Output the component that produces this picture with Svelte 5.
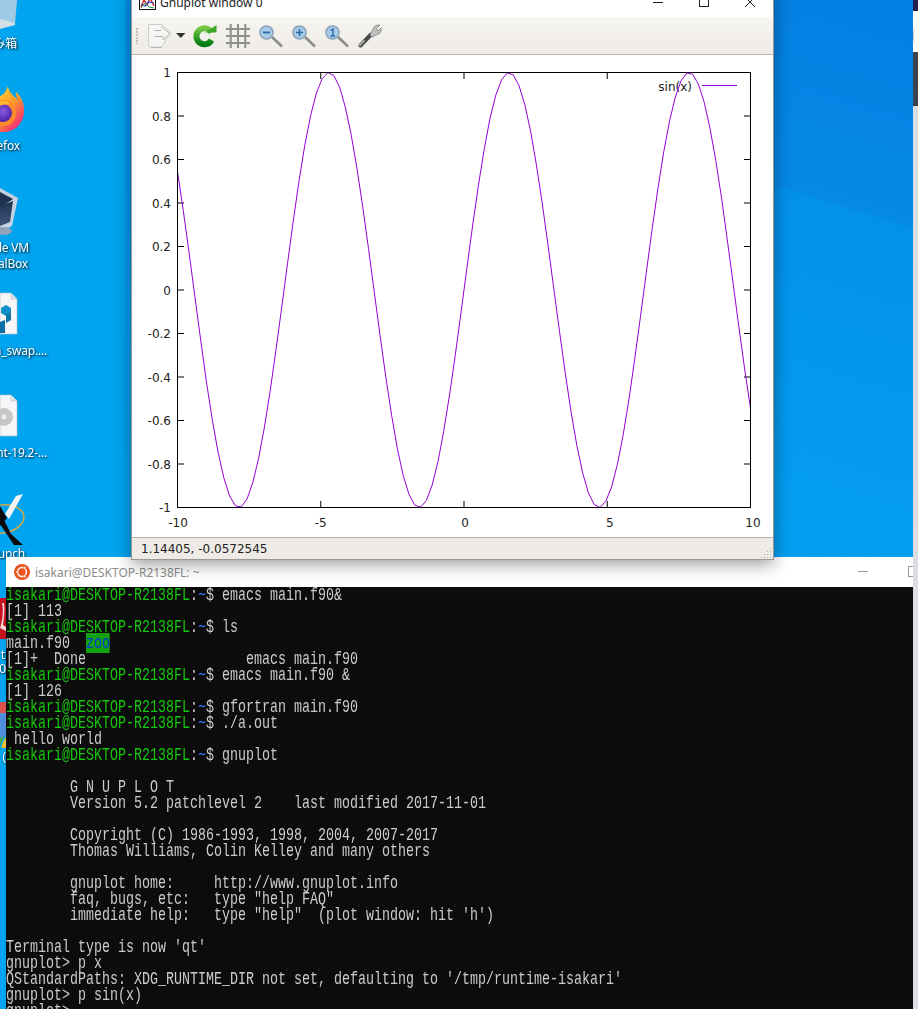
<script>
  // gnuplot draws 100 samples joined by straight lines
  const plot = { left: 177.5, right: 750.5, top: 72.5, bottom: 507.5 };
  const sx = (x) => plot.left + ((x + 10) / 20) * (plot.right - plot.left);
  const sy = (y) => plot.top + ((1 - y) / 2) * (plot.bottom - plot.top);

  const curve = Array.from({ length: 100 }, (_, i) => {
    const x = -10 + (i * 20) / 99;
    return `${sx(x).toFixed(1)},${sy(Math.sin(x)).toFixed(1)}`;
  }).join(' ');

  const yTicks = [-1, -0.8, -0.6, -0.4, -0.2, 0, 0.2, 0.4, 0.6, 0.8, 1];
  const xTicks = [
    { v: -10, nudge: 0.5 },
    { v: -5, nudge: 0 },
    { v: 0, nudge: 1 },
    { v: 5, nudge: 2.5 },
    { v: 10, nudge: 2.5 }
  ];

  const header = [
    { t: 'prompt', text: 'emacs main.f90&' },
    { text: '[1] 113' },
    { t: 'prompt', text: 'ls' },
    { t: 'ls' },
    { text: '[1]+  Done                    emacs main.f90' },
    { t: 'prompt', text: 'emacs main.f90 &' },
    { text: '[1] 126' },
    { t: 'prompt', text: 'gfortran main.f90' },
    { t: 'prompt', text: './a.out' },
    { text: ' hello world' },
    { t: 'prompt', text: 'gnuplot' },
    { text: '' },
    { text: '        G N U P L O T' },
    { text: '        Version 5.2 patchlevel 2    last modified 2017-11-01' },
    { text: '' },
    { text: '        Copyright (C) 1986-1993, 1998, 2004, 2007-2017' },
    { text: '        Thomas Williams, Colin Kelley and many others' },
    { text: '' },
    { text: '        gnuplot home:     http://www.gnuplot.info' },
    { text: '        faq, bugs, etc:   type "help FAQ"' },
    { text: `        immediate help:   type "help"  (plot window: hit 'h')` },
    { text: '' },
    { text: `Terminal type is now 'qt'` },
    { text: 'gnuplot> p x' },
    { text: `QStandardPaths: XDG_RUNTIME_DIR not set, defaulting to '/tmp/runtime-isakari'` },
    { text: 'gnuplot> p sin(x)' },
    { text: 'gnuplot>' }
  ];
</script>

<div class="desktop">
  <!-- desktop icons, cut off by the left edge of the screen -->
  <svg class="icons" width="130" height="800" viewBox="0 0 130 800">
    <defs>
      <linearGradient id="fox" x1="0" y1="0" x2="0.6" y2="1">
        <stop offset="0" stop-color="#ffd234" />
        <stop offset="0.5" stop-color="#ff9a2a" />
        <stop offset="1" stop-color="#f5277a" />
      </linearGradient>
      <radialGradient id="ball" cx="0.5" cy="0.4" r="0.6">
        <stop offset="0" stop-color="#8a5be0" />
        <stop offset="1" stop-color="#4a1fa8" />
      </radialGradient>
      <linearGradient id="screen" x1="0" y1="0" x2="0" y2="1">
        <stop offset="0" stop-color="#1f3350" />
        <stop offset="1" stop-color="#3d5578" />
      </linearGradient>
    </defs>

    <!-- recycle bin -->
    <path d="M0 0H17L15 24L0 28Z" fill="#9fcbe6" />
    <path d="M0 19L15 23L15 25L0 29Z" fill="#d6dfe6" />

    <!-- firefox -->
    <path d="M8 86C9 93 13 95 18 100C16 96 15 94 16 92C21 96 25 104 24 113C23 124 14 132 4 132H0V96C3 95 6 92 8 86Z" fill="url(#fox)" />
    <circle cx="3" cy="113" r="13" fill="#ff8a2a" />
    <circle cx="3" cy="113" r="9" fill="url(#ball)" />
    <path d="M0 101H7L10 104L2 105L0 106Z" fill="#ffb52e" />

    <!-- virtualbox -->
    <path d="M0 188L18 198L12 226L0 232Z" fill="#c5d3e0" />
    <path d="M0 192L13 199L0 208Z" fill="#1f3350" />
    <path d="M0 206L13 201L10 222L0 226Z" fill="url(#screen)" />
    <ellipse cx="3" cy="231" rx="9" ry="4" fill="#8fa3bb" />

    <!-- config file -->
    <path d="M0 293H11L17 299V334H0Z" fill="#f5f6f8" stroke="#b9c0c8" stroke-width="0.6" />
    <path d="M11 293V299H17" fill="#dfe3e8" stroke="#b9c0c8" stroke-width="0.6" />
    <path d="M1 308L6 305L11 308V313L6 316L1 313Z" fill="#0f8fc9" />
    <path d="M6 315L11 312V320L6 323Z" fill="#1076a8" />
    <path d="M0 322L5 320V333H0Z" fill="#0b6ea5" />

    <!-- iso file -->
    <path d="M0 395H11L17 401V436H0Z" fill="#f5f6f8" stroke="#b9c0c8" stroke-width="0.6" />
    <path d="M11 395V401H17" fill="#dfe3e8" stroke="#b9c0c8" stroke-width="0.6" />
    <circle cx="4" cy="417" r="9" fill="#c4c6c8" />
    <circle cx="4" cy="417" r="2.5" fill="#eceef0" />

    <!-- xlaunch -->
    <ellipse cx="2" cy="519" rx="22" ry="14" fill="none" stroke="#e2a93a" stroke-width="1.4" transform="rotate(-8 2 519)" />
    <path d="M0 506L7 518L0 526Z" fill="#0a0a0a" />
    <path d="M0 512L11 534L23 545H14L0 524Z" fill="#0a0a0a" />
    <path d="M9 519L23 494L16 496L5 514Z" fill="#f4f4f4" />

    <!-- shortcuts showing beside the terminal -->
    <rect x="0" y="598" width="6" height="41" fill="#c4121f" />
    <path d="M2 603C4 612 2 622 0 628L6 631V627L3 625C4 618 5 610 4 603Z" fill="#f3d6d6" />
    <rect x="0" y="702" width="6" height="11" fill="#d9534a" />
    <rect x="0" y="713" width="6" height="24" fill="#4f8edc" />
    <path d="M6 737V748H1L3 742Z" fill="#ecc13a" />
    <path d="M0 737H4L0 746Z" fill="#45a85a" />

    <g class="labels">
      <text x="17" y="48">ごみ箱</text>
      <text x="20" y="150">Firefox</text>
      <text x="29" y="252">Oracle VM</text>
      <text x="28" y="268">VirtualBox</text>
      <text x="47" y="355">fortran_swap....</text>
      <text x="47" y="457">mint-19.2-...</text>
      <text x="25" y="558">XLaunch</text>
      <text x="5" y="659">t</text>
      <text x="6" y="673">00</text>
      <text x="6" y="761">(</text>
    </g>
  </svg>

  <div class="edge">
    <div class="edge-navy"></div>
    <div class="edge-white"><span class="edge-ring"></span></div>
    <div class="edge-slate"></div>
  </div>

  <section class="terminal">
    <header class="term-title">
      <svg width="16" height="16" viewBox="0 0 16 16">
        <circle cx="8" cy="8" r="8" fill="#e95420" />
        <circle cx="8" cy="8" r="4.4" fill="none" stroke="#fff" stroke-width="1.5" />
        <circle cx="3.2" cy="8" r="1.3" fill="#fff" stroke="#e95420" stroke-width="0.5" />
        <circle cx="10.6" cy="3.8" r="1.3" fill="#fff" stroke="#e95420" stroke-width="0.5" />
        <circle cx="10.6" cy="12.2" r="1.3" fill="#fff" stroke="#e95420" stroke-width="0.5" />
      </svg>
      <span class="term-name">isakari@DESKTOP-R2138FL: ~</span>
      <span class="term-min"></span>
      <span class="term-max"></span>
    </header>
    <pre class="screen">{#each header as line}<div class="line">{#if line.t === 'prompt'}<span class="green">isakari@DESKTOP-R2138FL</span>:<span class="blue">~</span>$ {line.text}{:else if line.t === 'ls'}main.f90  <span class="zoo">zoo</span>{:else}{line.text}{/if}</div>{/each}</pre>
  </section>

  <section class="plot-window">
    <header class="plot-title">
      <svg width="17" height="17" viewBox="0 0 17 17">
        <rect x="0.5" y="0.5" width="16" height="15" fill="#fff" stroke="#111" />
        <path d="M2 13L5 6L8 11L11 4L15 12" fill="none" stroke="#d8232a" stroke-width="1.4" />
        <path d="M2 10L6 12L10 8L15 9" fill="none" stroke="#2a44c8" stroke-width="1.2" />
        <path d="M2 14L6 9L10 13L15 14" fill="none" stroke="#2f9e44" stroke-width="1" />
      </svg>
      <span class="plot-name">Gnuplot window 0</span>
      <span class="win-controls">
        <svg width="10" height="10" viewBox="0 0 10 10"><path d="M0 5.5H10" stroke="#222" /></svg>
        <svg width="10" height="10" viewBox="0 0 10 10"><rect x="0.5" y="0.5" width="9" height="9" fill="none" stroke="#222" /></svg>
        <svg width="10" height="10" viewBox="0 0 10 10"><path d="M0 0L10 10M10 0L0 10" stroke="#222" /></svg>
      </span>
    </header>

    <div class="toolbar">
      <span class="grip"></span>
      <!-- export -->
      <svg class="tool" width="24" height="24" viewBox="0 0 24 24">
        <path d="M0.5 0.5H14L17 3L23.5 9.5L17 16V18L13 23H2L0.5 21Z" fill="#f5f5f3" stroke="#cdcdca" />
        <path d="M13 2.5L22 9.5L15 16V12.5H6M13 6.5H6" fill="none" stroke="#b5b5b2" />
        <path d="M3 23.5H14" stroke="#bdbdba" />
      </svg>
      <svg class="caret" width="10" height="5" viewBox="0 0 10 5"><path d="M0 0H9.5L4.8 5Z" fill="#333" /></svg>
      <!-- replot -->
      <svg class="tool refresh" width="24" height="24" viewBox="0 0 24 24">
        <defs>
          <linearGradient id="green" x1="0" y1="0" x2="0" y2="1">
            <stop offset="0" stop-color="#74c843" />
            <stop offset="1" stop-color="#067a12" />
          </linearGradient>
        </defs>
        <path d="M18.5 8.5A8 8 0 1 0 18.5 16" fill="none" stroke="url(#green)" stroke-width="6" />
        <path d="M12 8.5H23.5V1Z" fill="#3da828" />
      </svg>
      <!-- grid -->
      <svg class="tool" width="24" height="24" viewBox="0 0 24 24">
        <path d="M4.7 0V24M12 0V24M19.3 0V24M0 5H24M0 12H24M0 19H24" stroke="#8f8f8f" stroke-width="2" />
      </svg>
      <!-- zoom out, in, reset -->
      <svg class="tool" width="24" height="24" viewBox="0 0 24 24">
        <path d="M13 13L23 22.5" stroke="#8c8c8c" stroke-width="2.6" />
        <circle cx="7.5" cy="8.5" r="6.5" fill="#a7cbe8" stroke="#8ca4ba" stroke-width="1.6" />
        <path d="M4 8.5H11" stroke="#2a6da8" stroke-width="1.8" />
      </svg>
      <svg class="tool" width="24" height="24" viewBox="0 0 24 24">
        <path d="M13 13L23 22.5" stroke="#8c8c8c" stroke-width="2.6" />
        <circle cx="7.5" cy="8.5" r="6.5" fill="#a7cbe8" stroke="#8ca4ba" stroke-width="1.6" />
        <path d="M4 8.5H11M7.5 5V12" stroke="#2a6da8" stroke-width="1.6" />
      </svg>
      <svg class="tool" width="24" height="24" viewBox="0 0 24 24">
        <path d="M13 13L23 22.5" stroke="#8c8c8c" stroke-width="2.6" />
        <circle cx="7.5" cy="8.5" r="6.5" fill="#a7cbe8" stroke="#8ca4ba" stroke-width="1.6" />
        <path d="M5.5 6.5L8 5V12M5.5 12H10" fill="none" stroke="#2a6da8" stroke-width="1.4" />
      </svg>
      <!-- settings -->
      <svg class="tool" width="24" height="24" viewBox="0 0 24 24">
        <path d="M2.5 21.5L13 10.5" stroke="#4a4a4a" stroke-width="4" stroke-linecap="round" />
        <path d="M2 21L6 17" stroke="#a5a5a5" stroke-width="2" stroke-linecap="round" />
        <path d="M12 11L15 5C16 2 19 0.5 22 1L18.5 4.5L20 7L23 4C24 7 22 10 19 10.5L14 13Z" fill="#c0c0c0" stroke="#777" stroke-width="0.7" />
      </svg>
    </div>

    <svg class="plot" width="641" height="481" viewBox="132 56 641 481">
      <rect x="132" y="56" width="641" height="481" fill="#fff" />

      {#each yTicks as v}
        <path d="M{plot.left} {sy(v)}h6.5M{plot.right} {sy(v)}h-6.5" stroke="#000" />
        <text class="tick" x="171" y={sy(v) + 4.5} text-anchor="end">{v}</text>
      {/each}
      {#each xTicks as { v, nudge }}
        <path d="M{sx(v)} {plot.top}v6.5M{sx(v)} {plot.bottom}v-6.5" stroke="#000" />
        <text class="tick" x={sx(v) + nudge} y="527" text-anchor="middle">{v}</text>
      {/each}

      <text class="tick" x="692" y="91" text-anchor="end">sin(x)</text>
      <path d="M702 85.5H737" stroke="#9400d3" />

      <polyline points={curve} fill="none" stroke="#9400d3" />
      <rect x={plot.left} y={plot.top} width={plot.right - plot.left} height={plot.bottom - plot.top} fill="none" stroke="#000" />
    </svg>

    <footer class="status">
      <span>1.14405, -0.0572545</span>
      <svg class="size-grip" width="11" height="11" viewBox="0 0 11 11">
        <path d="M9 1h1v1H9zM6 4h1v1H6zM9 4h1v1H9zM3 7h1v1H3zM6 7h1v1H6zM9 7h1v1H9zM0 10h1v1H0zM3 10h1v1H3zM6 10h1v1H6zM9 10h1v1H9z" fill="#b5b2ab" />
      </svg>
    </footer>
  </section>
</div>

<style>
  :global(body) {
    margin: 0;
    overflow: hidden;
  }

  .desktop {
    position: relative;
    width: 918px;
    height: 1009px;
    overflow: hidden;
    background:
      linear-gradient(to right, #00a4ef 0, #00a4ef 125px, transparent 126px),
      linear-gradient(197deg, #047fe2 0, #0589e6 216px, #0391ea 222px, #049cf1 498px, #00a4f0 700px);
  }

  .icons {
    position: absolute;
    left: 0;
    top: 0;
  }

  .labels text {
    font-family: "Noto Sans", "Noto Sans CJK JP", sans-serif;
    font-size: 12px;
    letter-spacing: -0.2px;
    fill: #fff;
    text-anchor: end;
    filter: drop-shadow(1px 1px 1px rgba(0, 0, 0, 0.9));
  }

  .edge {
    position: absolute;
    left: 913px;
    top: 0;
    width: 5px;
    height: 100%;
    background: #dcdde3;
  }

  .edge-navy {
    height: 11px;
    background: #20214f;
  }

  .edge-white {
    height: 41px;
    background: #fff;
    padding-top: 16px;
    box-sizing: border-box;
  }

  .edge-ring {
    display: block;
    width: 5px;
    height: 18px;
    border-left: 1px solid #ccc;
    border-radius: 50%;
  }

  .edge-slate {
    height: 54px;
    background: #3a4252;
  }

  /* terminal */
  .terminal {
    position: absolute;
    left: 6px;
    top: 557px;
    width: 907px;
    height: 452px;
    display: flex;
    flex-direction: column;
    overflow: hidden;
    background: #0c0c0c;
  }

  .term-title {
    height: 30px;
    flex: none;
    display: flex;
    align-items: center;
    padding-left: 8px;
    gap: 5px;
    background: #fff;
    font: 12px "Noto Sans", sans-serif;
    color: #8c8c8c;
  }

  .term-name {
    flex: 1;
  }

  .term-min {
    width: 10px;
    height: 1px;
    background: #999;
    margin: 0 35px 2px 0;
  }

  .term-max {
    width: 4px;
    height: 9px;
    border: 1px solid #999;
    border-right: none;
    margin-bottom: 2px;
  }

  /* the console font is a tall, narrow gothic: squeeze a larger mono into 8px cells */
  .screen {
    margin: 0;
    width: 1225px;
    flex: none;
    font-family: "Liberation Mono", monospace;
    font-size: 18px;
    color: #cccccc;
    transform: scaleX(0.7407);
    transform-origin: 0 0;
  }

  .line {
    height: 16px;
    line-height: 16px;
    white-space: pre;
  }

  .green {
    color: #16c60c;
  }

  .blue {
    color: #3b78ff;
  }

  .zoo {
    background: #13a10e;
    color: #0037da;
  }

  /* gnuplot window */
  .plot-window {
    position: absolute;
    left: 131px;
    top: -13px;
    width: 643px;
    height: 573px;
    box-sizing: border-box;
    display: flex;
    flex-direction: column;
    border: 1px solid #9a9895;
    border-width: 0 1px 1px 1px;
    background: #fff;
    box-shadow: 0 4px 16px rgba(0, 0, 0, 0.4);
  }

  .plot-title {
    height: 30px;
    flex: none;
    box-sizing: border-box;
    display: flex;
    align-items: center;
    padding: 0 0 0 7px;
    gap: 4px;
    font: 12px "Noto Sans", sans-serif;
    color: #222;
  }

  .plot-name {
    flex: 1;
  }

  .win-controls {
    display: flex;
    gap: 36px;
    margin-right: 18px;
  }

  .toolbar {
    height: 38px;
    flex: none;
    box-sizing: border-box;
    display: flex;
    align-items: center;
    padding-left: 4px;
    background: linear-gradient(#f7f5f0, #eeebe5);
    border-bottom: 1px solid #b8b6b1;
  }

  .grip {
    width: 3px;
    height: 16px;
    margin-right: 9px;
    background: radial-gradient(circle at 1px 1px, #c4c1ba 1px, transparent 1px) 0 0 / 3px 3px;
  }

  .tool {
    margin-right: 9px;
    flex: none;
  }

  .tool:first-of-type {
    margin-right: 4px;
  }

  .caret {
    margin-right: 7px;
    flex: none;
  }

  .plot {
    display: block;
    margin-top: 1px;
    flex: none;
  }

  .tick {
    font: 12px "DejaVu Sans", sans-serif;
    fill: #222;
  }

  .status {
    flex: 1;
    box-sizing: border-box;
    display: flex;
    align-items: center;
    justify-content: space-between;
    padding-left: 9px;
    background: #eeebe6;
    border-top: 1px solid #b3b0aa;
    font: 12px "DejaVu Sans", sans-serif;
    color: #222;
  }

  .size-grip {
    align-self: flex-end;
    margin: 0 1px 1px 0;
  }
</style>
